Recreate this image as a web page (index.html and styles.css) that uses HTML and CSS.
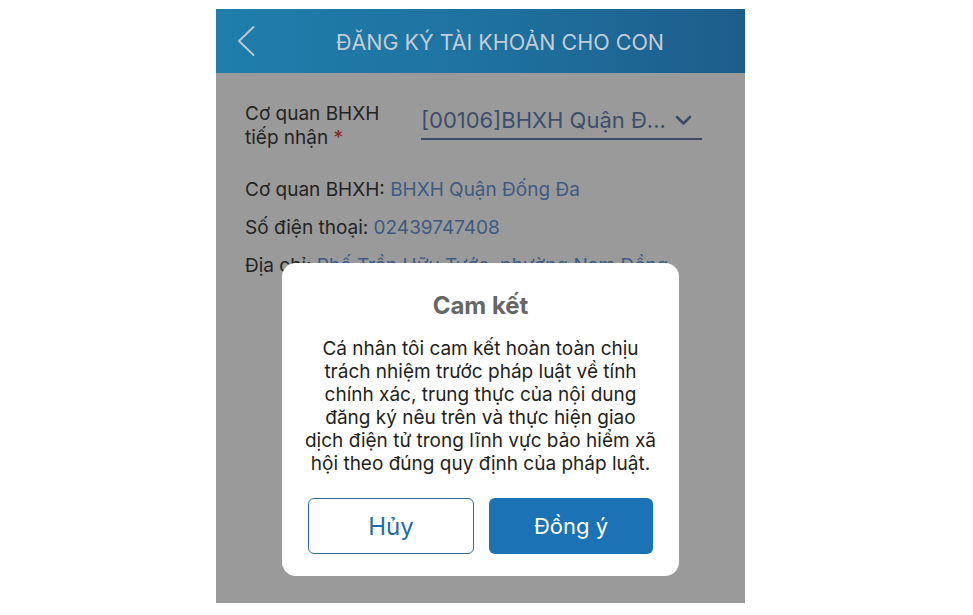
FILE: index.html
```html
<!DOCTYPE html>
<html lang="vi">
<head>
    <meta charset="UTF-8">
    <meta name="viewport" content="width=device-width, initial-scale=1.0">
    <title>Đăng ký tài khoản cho con</title>
    <link rel="stylesheet" href="styles.css">
</head>
<body>

    <div class="phone">
        <div class="topbar">
            <svg class="back" width="18" height="30" viewBox="0 0 18 30">
                <path d="M16.5 1 L2 15 L16.5 29" fill="none" stroke="#c0c9d3" stroke-width="1.8" stroke-linecap="round" stroke-linejoin="round"/>
            </svg>
            <div class="title">ĐĂNG KÝ TÀI KHOẢN CHO CON</div>
        </div>

        <div class="content">
            <div class="row-select">
                <div class="label">Cơ quan BHXH<br>tiếp nhận <span class="req">*</span></div>
                <div class="select">
                    <span class="select-text">[00106]BHXH Quận Đ...</span>
                    <svg width="17" height="11" viewBox="0 0 17 11">
                        <path d="M2 2 L8.5 8.5 L15 2" fill="none" stroke="#3a4d6c" stroke-width="2.6" stroke-linecap="round" stroke-linejoin="round"/>
                    </svg>
                </div>
            </div>
            <div class="info">Cơ quan BHXH: <span class="val">BHXH Quận Đống Đa</span></div>
            <div class="info">Số điện thoại: <span class="val">02439747408</span></div>
            <div class="info">Địa chỉ: <span class="val">Phố Trần Hữu Tước, phường Nam Đồng</span></div>
        </div>

        <div class="overlay">
            <div class="dialog">
                <div class="dialog-title">Cam kết</div>
                <p class="dialog-text">Cá nhân tôi cam kết hoàn toàn chịu<br>trách nhiệm trước pháp luật về tính<br>chính xác, trung thực của nội dung<br>đăng ký nêu trên và thực hiện giao<br>dịch điện tử trong lĩnh vực bảo hiểm xã<br>hội theo đúng quy định của pháp luật.</p>
                <div class="actions">
                    <button class="btn btn-cancel">Hủy</button>
                    <button class="btn btn-ok">Đồng ý</button>
                </div>
            </div>
        </div>
    </div>

</body>
</html>
```

FILE: styles.css
```css
body {
    margin: 0;
    padding: 0;
    background-color: #fff;
    font-family: Inter, "Liberation Sans", Arial, sans-serif;
}
.phone {
    position: relative;
    margin: 9px 0 0 216px;
    width: 529px;
    height: 594px;
    background-color: #9a9a9a;
    overflow: hidden;
}
.topbar {
    height: 64px;
    display: flex;
    align-items: center;
    padding-left: 21px;
    background: linear-gradient(90deg, #1f7eab 0%, #1e72a0 50%, #1d5d8b 100%);
}
.back {
    flex: none;
}
.title {
    flex: 1;
    text-align: center;
    color: #c4ccd6;
    font-size: 21.5px;
    padding-top: 2px;
}
.content {
    padding: 29px 0 0 29px;
    color: #232323;
    font-size: 19px;
}
.row-select {
    display: flex;
    align-items: flex-start;
}
.label {
    width: 176px;
    line-height: 24px;
}
.req {
    color: #8a2323;
}
.select {
    width: 281px;
    height: 38px;
    display: flex;
    align-items: center;
    justify-content: space-between;
    border-bottom: 2px solid #3d4b62;
    padding-right: 10px;
    box-sizing: border-box;
}
.select-text {
    color: #3d4e6b;
    font-size: 22px;
}
.info {
    line-height: 24px;
    margin-top: 14px;
}
.row-select + .info {
    margin-top: 28px;
}
.val {
    color: #3e5a82;
}
.overlay {
    position: absolute;
    top: 0;
    left: 0;
    right: 0;
    bottom: 0;
    display: flex;
    justify-content: center;
    align-items: flex-end;
    padding-bottom: 27px;
    box-sizing: border-box;
}
.dialog {
    width: 397px;
    height: 313px;
    box-sizing: border-box;
    background-color: #fff;
    border-radius: 14px;
    padding: 28px 16px 21px;
    text-align: center;
}
.dialog-title {
    font-size: 24px;
    font-weight: bold;
    line-height: 30px;
    color: #666;
}
.dialog-text {
    margin: 16px 0 0;
    font-size: 19px;
    line-height: 23px;
    color: #1e1e1e;
    white-space: nowrap;
}
.actions {
    display: flex;
    gap: 15px;
    margin: 23px 10px 0;
}
.btn {
    flex: 1;
    height: 56px;
    border-radius: 6px;
    font-family: inherit;
    font-size: 24px;
    cursor: pointer;
}
.btn-cancel {
    background-color: #fff;
    border: 1.5px solid #2a6b96;
    color: #1f6da6;
}
.btn-ok {
    background-color: #1b72b5;
    border: none;
    color: #fff;
    font-size: 22px;
}
```
